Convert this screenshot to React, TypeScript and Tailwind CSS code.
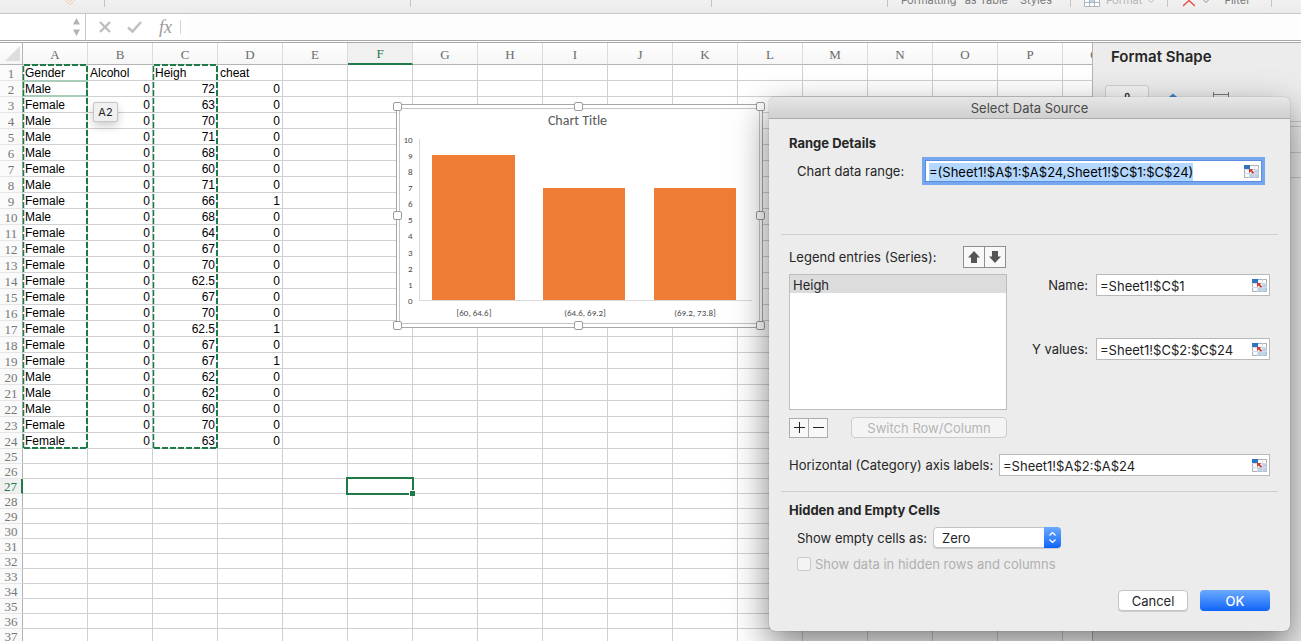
import { useEffect, useRef } from "react";
import type { ReactNode, Ref } from "react";

const SANS = "font-[Inter,'Liberation_Sans',sans-serif]";

const columns = "ABCDEFGHIJKLMNOPQ".split("");

const records: [string, string, string][] = [
  ["Male", "72", "0"],
  ["Female", "63", "0"],
  ["Male", "70", "0"],
  ["Male", "71", "0"],
  ["Male", "68", "0"],
  ["Female", "60", "0"],
  ["Male", "71", "0"],
  ["Female", "66", "1"],
  ["Male", "68", "0"],
  ["Female", "64", "0"],
  ["Female", "67", "0"],
  ["Female", "70", "0"],
  ["Female", "62.5", "0"],
  ["Female", "67", "0"],
  ["Female", "70", "0"],
  ["Female", "62.5", "1"],
  ["Female", "67", "0"],
  ["Female", "67", "1"],
  ["Male", "62", "0"],
  ["Male", "62", "0"],
  ["Male", "60", "0"],
  ["Female", "70", "0"],
  ["Female", "63", "0"],
];

const sheet: string[][] = [
  ["Gender", "Alcohol", "Heigh", "cheat"],
  ...records.map(([gender, height, cheat]) => [gender, "0", height, cheat]),
];

function Separator({ className = "" }: { className?: string }) {
  return <span className={`h-3 w-px shrink-0 bg-[#c4c4c4] ${className}`} />;
}

function Ribbon() {
  return (
    <header
      className={`flex h-[14px] shrink-0 items-end overflow-hidden border-b border-[#c6c6c6] bg-linear-to-b from-[#f1f1f1] to-[#ebebeb] pb-[6px] text-[11px] leading-[14px] text-[#7a7a7a] ${SANS}`}
    >
      <svg className="ml-[64px] h-3 w-3 shrink-0" viewBox="0 0 12 12" fill="none" stroke="#f3cfb4">
        <path d="M1 5l5 5 5-5M4 5l2 2 2-2" />
      </svg>
      <Separator className="ml-[28px]" />
      <Separator className="ml-[305px]" />
      <Separator className="ml-[300px]" />
      <Separator className="ml-[175px]" />
      <span className="ml-[13px] shrink-0">Formatting</span>
      <span className="ml-2 shrink-0">as Table</span>
      <span className="ml-3 shrink-0">Styles</span>
      <Separator className="ml-[18px]" />
      <svg className="ml-[13px] h-[14px] w-4 shrink-0" viewBox="0 0 16 14" fill="#fff" stroke="#a9b4bd">
        <path d="M.5.5h15v13H.5z" />
        <path d="M5 .5h6v9H5z" fill="#b7d8f0" stroke="none" />
        <path d="M5.500 0v13M10.500 0v13M0 9.500h16M0 5.500h16" />
      </svg>
      <span className="ml-[6px] shrink-0 text-[#b5b5b5]">Format</span>
      <svg className="mb-1 ml-[6px] h-1 w-[6px] shrink-0" viewBox="0 0 6 4" fill="none" stroke="#bbb">
        <path d="M0 .5l3 3 3-3" />
      </svg>
      <Separator className="ml-[13px]" />
      <svg className="ml-[15px] h-3 w-3 shrink-0" viewBox="0 0 12 12" fill="none" stroke="#ee4b4b" strokeWidth="1.4">
        <path d="M0 0l12 11M12 0L0 11" />
      </svg>
      <svg className="mb-1 ml-[8px] h-1 w-[6px] shrink-0" viewBox="0 0 6 4" fill="none" stroke="#888">
        <path d="M0 .5l3 3 3-3" />
      </svg>
      <span className="ml-[15px] shrink-0">Filter</span>
      <Separator className="ml-[21px]" />
    </header>
  );
}

function FormulaBar() {
  return (
    <div className="flex h-[29px] shrink-0 items-stretch border-b border-[#a8a8a8] bg-white">
      <div className="mb-px flex grow items-stretch border-b border-[#a8a8a8]">
        <div className="flex w-[86px] items-center justify-end border-r border-[#c8c8c8] pr-[5px]">
          <svg className="h-[18px] w-[7px]" viewBox="0 0 7 18" fill="#b3b3b3">
            <path d="M3.500 0L7 6.500H0zM3.500 18L0 11.500h7z" />
          </svg>
        </div>
        <button type="button" aria-label="Cancel entry" className="ml-[13px] flex items-center">
          <svg className="h-3 w-3" viewBox="0 0 12 12" fill="none" stroke="#bdbdbd" strokeWidth="2.300">
            <path d="M1 1l10 10M11 1L1 11" />
          </svg>
        </button>
        <button type="button" aria-label="Confirm entry" className="ml-4 flex items-center">
          <svg className="h-3 w-[15px]" viewBox="0 0 15 12" fill="none" stroke="#c0c0c0" strokeWidth="2.600">
            <path d="M1 6.500l4.500 4L14 1" />
          </svg>
        </button>
        <button
          type="button"
          className="ml-[17px] flex items-center font-['Liberation_Serif',serif] text-[18px] leading-5 text-[#999] italic"
        >
          fx
        </button>
        <span className="my-[6px] ml-[8px] w-px bg-[#d6d6d6]" />
        <input aria-label="Formula" className="ml-[6px] min-w-0 grow bg-[#fdfdfd] outline-none" />
      </div>
    </div>
  );
}

function MarchingAnts({ className }: { className: string }) {
  return (
    <svg
      className={`pointer-events-none absolute z-10 h-[386px] w-[67px] ${className}`}
      viewBox="0 0 67 386"
      fill="none"
      stroke="#1f7a4a"
      strokeWidth="2"
      strokeDasharray="6 2"
    >
      <path d="M2 1H66M2 384H66M65 2V384" />
      <path d="M1.500 2V384" strokeWidth="1.500" />
    </svg>
  );
}

function Grid() {
  return (
    <table className="w-[1128px] table-fixed border-separate border-spacing-0">
      <colgroup>
        <col className="w-[23px]" />
        {columns.map((c) => (
          <col key={c} className="w-[65px]" />
        ))}
      </colgroup>
      <thead>
        <tr className="h-[22px] bg-linear-to-b from-white to-[#f5f5f5] font-['Liberation_Serif',serif] text-[13px] leading-[18px] text-[#6a6a6a]">
          <th className="border-r border-b border-[#b4b4b4] p-0">
            <svg className="ml-[5px] h-[15px] w-[15px]" viewBox="0 0 15 15" fill="#dedede">
              <path d="M15 0v15H0z" />
            </svg>
          </th>
          {columns.map((c) => (
            <th
              key={c}
              className={
                c === "F"
                  ? "border-r border-b-2 border-r-[#dcdcdc] border-b-[#1f7a4a] bg-[#f0f0f0] p-0 pt-[2px] font-normal text-[#1f7a4a]"
                  : "border-r border-b border-r-[#dcdcdc] border-b-[#b4b4b4] p-0 pt-[3px] font-normal"
              }
            >
              {c}
            </th>
          ))}
        </tr>
      </thead>
      <tbody>
        {Array.from({ length: 37 }, (_, i) => {
          const row = i + 1;
          const filled = row <= 24;
          return (
            <tr key={row} className={filled ? "h-4" : "h-[15px]"}>
              <th
                className={`border-b border-b-[#e6e6e6] p-0 font-['Liberation_Serif',serif] text-[13px] leading-3 font-normal ${
                  row === 27
                    ? "border-r-2 border-r-[#1f7a4a] bg-[#f0f0f0] text-[#1f7a4a]"
                    : "border-r border-r-[#b4b4b4] bg-[#fafafa] text-[#777]"
                }`}
              >
                <span className={filled ? "block pt-[3px]" : "block pt-[2px]"}>{row}</span>
              </th>
              {columns.map((c, j) => {
                const value = sheet[i]?.[j];
                const numeric = row > 1 && j > 0;
                return (
                  <td
                    key={c}
                    className={`relative border-r border-b border-[#d0d0d0] px-[2px] py-0 font-['Liberation_Sans',Arial,sans-serif] text-[12px] leading-[14px] whitespace-nowrap text-black ${
                      numeric ? "text-right" : "text-left"
                    }`}
                  >
                    {value}
                    {row === 1 && (c === "A" || c === "C") && <MarchingAnts className="-top-px -left-px" />}
                    {row === 2 && c === "A" && (
                      <span className="absolute -inset-px z-[5] border-2 border-[#a9cdb8]" />
                    )}
                    {row === 27 && c === "F" && (
                      <span className="absolute -inset-[2px] z-10 border-2 border-[#1f7a4a]">
                        <span className="absolute -right-[3px] -bottom-[3px] h-[6px] w-[6px] border-t border-l border-white bg-[#1f7a4a]" />
                      </span>
                    )}
                  </td>
                );
              })}
            </tr>
          );
        })}
      </tbody>
    </table>
  );
}

const handles: [number, number][] = [
  [5, 5],
  [186, 5],
  [368, 5],
  [5, 114],
  [368, 114],
  [5, 224],
  [186, 224],
  [368, 224],
];

const bars = [
  { x: 40, y: 54, w: 83, label: "[60, 64.6]", cx: 82 },
  { x: 151, y: 87, w: 82, label: "(64.6, 69.2]", cx: 193 },
  { x: 262, y: 87, w: 82, label: "(69.2, 73.8]", cx: 303 },
];

function Chart() {
  return (
    <svg
      className="absolute top-[58px] left-[392px] h-[230px] w-[374px] font-[Carlito,Lato,sans-serif]"
      viewBox="0 0 374 230"
      role="img"
      aria-label="Histogram of heights"
    >
      <rect x="4.500" y="3.500" width="366" height="223" fill="#fff" stroke="#a6a6a6" />
      <rect x="7.500" y="7.500" width="360" height="215" fill="#fff" stroke="#c4c4c4" />
      <text x="185.500" y="24" textAnchor="middle" fontSize="14" fill="#595959">
        Chart Title
      </text>
      <path d="M27.500 38V199.500H360" fill="none" stroke="#d9d9d9" />
      {Array.from({ length: 11 }, (_, n) => (
        <text key={n} x="20.500" y={203 - n * 16.15} textAnchor="end" fontSize="9" fill="#4a4a4a">
          {n}
        </text>
      ))}
      {bars.map((b) => (
        <g key={b.label}>
          <rect x={b.x} y={b.y} width={b.w} height={199 - b.y} fill="#ef7d36" />
          <text x={b.cx} y="215" textAnchor="middle" fontSize="9" fill="#4a4a4a">
            {b.label}
          </text>
        </g>
      ))}
      {handles.map(([x, y]) => (
        <rect key={`${x}-${y}`} x={x - 3.5} y={y - 3.5} width="8" height="8" rx="1.500" fill="#fff" stroke="#9a9a9a" />
      ))}
    </svg>
  );
}

function FormatPane() {
  return (
    <aside className={`w-[209px] shrink-0 border-l border-[#b4b4b4] bg-[#ececec] ${SANS}`}>
      <h2 className="pt-1 pl-[18px] text-[15px] leading-5 font-semibold text-[#262626]">Format Shape</h2>
      <div className="mt-[18px] ml-3 flex h-9 gap-4">
        <button
          type="button"
          aria-label="Fill and line"
          className="flex w-[44px] justify-center rounded-[3px] border border-[#cfcfcf] bg-[#f4f4f4] pt-[6px]"
        >
          <svg className="h-5 w-3" viewBox="0 0 12 20" fill="none" stroke="#444" strokeWidth="1.500">
            <path d="M4.500 12V3a1.800 1.800 0 013.500 0v9" />
          </svg>
        </button>
        <svg className="mt-[8px] h-5 w-4" viewBox="0 0 16 20" fill="#3f87d3">
          <path d="M1 6.500L8 .5l7 6v7l-7 5-7-5z" />
        </svg>
        <svg className="mt-[7px] ml-4 h-5 w-4" viewBox="0 0 16 20" fill="none" stroke="#777">
          <path d="M.5 0v5M15.500 0v5M0 2.500h16" />
        </svg>
      </div>
      <div className="h-[6px] border-y border-[#c9c9c9]" />
      <div className="h-[26px] border-b border-[#c9c9c9]" />
      <div className="h-[25px] border-b border-[#c9c9c9]" />
    </aside>
  );
}

function RangePicker() {
  return (
    <button type="button" aria-label="Pick range" className="shrink-0">
      <svg className="block h-[13px] w-[15px]" viewBox="0 0 15 13">
        <path d="M.5.5h14v12H.5z" fill="#fbfbfb" stroke="#a9adb2" />
        <path d="M5 8h9.500v4.500H5zM10 5h4.500v3H10z" fill="#bcd3ea" />
        <path d="M5.500 4v9M10.500 0v13M0 4.500h15M0 8.500h15" fill="none" stroke="#d3dae2" />
        <path d="M0 0h6v4H0z" fill="#2f74c0" />
        <path d="M5 4h4L8 5.200l2.200 2.200-1.400 1.400-2.300-2.200L5 8z" fill="#cf3a35" />
      </svg>
    </button>
  );
}

function RangeField({
  id,
  value,
  className,
  inputRef,
}: {
  id: string;
  value: string;
  className: string;
  inputRef?: Ref<HTMLInputElement>;
}) {
  return (
    <div className={`flex items-center bg-white ${className}`}>
      <input
        id={id}
        ref={inputRef}
        defaultValue={value}
        className="min-w-0 grow bg-transparent pt-px text-[13px] leading-[18px] text-[#222] outline-none selection:bg-[#b3d7ff] selection:text-black"
      />
      <RangePicker />
    </div>
  );
}

function SquareButton({ label, className, children }: { label: string; className: string; children: ReactNode }) {
  return (
    <button type="button" aria-label={label} className={`flex items-center justify-center border bg-[#f8f8f8] ${className}`}>
      {children}
    </button>
  );
}

const FIELD = "h-[22px] border border-[#b9b9b9] pr-[2px] pl-[3px]";

function DataSourceDialog() {
  const rangeRef = useRef<HTMLInputElement>(null);

  useEffect(() => {
    rangeRef.current?.focus();
    rangeRef.current?.select();
  }, []);

  return (
    <section
      role="dialog"
      aria-labelledby="dialog-title"
      className={`absolute top-[97px] right-[11px] z-30 w-[521px] rounded-[6px] bg-[#ececec] text-[13px] leading-4 text-[#262626] shadow-[0_0_1px_rgba(0,0,0,0.5),0_14px_36px_rgba(0,0,0,0.5)] ${SANS}`}
    >
      <h1
        id="dialog-title"
        className="h-[22px] rounded-t-[6px] border-b border-[#adadad] bg-linear-to-b from-[#e6e6e6] to-[#d0d0d0] text-center text-[13px] leading-[22px] text-[#4a4a4a]"
      >
        Select Data Source
      </h1>
      <form className="px-5 pt-4 pb-5" onSubmit={(e) => e.preventDefault()}>
        <h2 className="font-bold">Range Details</h2>
        <div className="mt-[6px] mr-[5px] flex h-7 items-center pl-2">
          <label htmlFor="chart-range" className="w-[128px]">
            Chart data range:
          </label>
          <RangeField
            id="chart-range"
            inputRef={rangeRef}
            value="=(Sheet1!$A$1:$A$24,Sheet1!$C$1:$C$24)"
            className="mr-[3px] h-[22px] grow border border-[#5a8fe0] pr-[2px] pl-[3px] ring-3 ring-[#76a6ee]"
          />
        </div>

        <hr className="-mx-2 mt-[49px] border-[#cfcfcf]" />

        <div className="mt-[11px] flex h-[22px] w-[217px] items-center justify-between">
          <label htmlFor="series">Legend entries (Series):</label>
          <div className="flex">
            <SquareButton label="Move up" className="h-[22px] w-[22px] border-[#8f8f8f]">
              <svg className="h-3 w-3" viewBox="0 0 12 12" fill="#555">
                <path d="M6 0l6 6.500H9V12H3V6.500H0z" />
              </svg>
            </SquareButton>
            <SquareButton label="Move down" className="-ml-px h-[22px] w-[22px] border-[#8f8f8f]">
              <svg className="h-3 w-3" viewBox="0 0 12 12" fill="#555">
                <path d="M6 12l6-6.500H9V0H3v5.500H0z" />
              </svg>
            </SquareButton>
          </div>
        </div>

        <div className="mt-[6px] flex justify-between">
          <select
            id="series"
            size={7}
            defaultValue="Heigh"
            className="h-[136px] w-[218px] appearance-none overflow-hidden border border-[#bdbdbd] bg-white outline-none"
          >
            <option className="h-[18px] px-[3px] pt-[2px] pb-0 text-[13px] text-[#262626] checked:bg-[#dcdcdc] checked:bg-linear-to-b checked:from-[#dcdcdc] checked:to-[#dcdcdc]">
              Heigh
            </option>
          </select>
          <div className="flex flex-col gap-[42px]">
            <div className="flex items-center justify-end gap-2">
              <label htmlFor="series-name">Name:</label>
              <RangeField id="series-name" value="=Sheet1!$C$1" className={`w-[174px] ${FIELD}`} />
            </div>
            <div className="flex items-center justify-end gap-2">
              <label htmlFor="series-values">Y values:</label>
              <RangeField id="series-values" value="=Sheet1!$C$2:$C$24" className={`w-[174px] ${FIELD}`} />
            </div>
          </div>
        </div>

        <div className="mt-[7px] flex h-[21px] w-[218px] items-center justify-between">
          <div className="flex">
            <SquareButton label="Add series" className="h-5 w-5 border-[#adadad]">
              <svg className="h-[11px] w-[11px]" viewBox="0 0 11 11" stroke="#222">
                <path d="M5.500 0v11M0 5.500h11" />
              </svg>
            </SquareButton>
            <SquareButton label="Remove series" className="-ml-px h-5 w-5 border-[#adadad]">
              <svg className="h-[11px] w-[11px]" viewBox="0 0 11 11" stroke="#222">
                <path d="M0 5.500h11" />
              </svg>
            </SquareButton>
          </div>
          <button
            type="button"
            disabled
            className="h-[21px] w-[156px] rounded-[4px] border border-[#cdcdcd] bg-[#f4f4f4] text-[#b5b5b5]"
          >
            Switch Row/Column
          </button>
        </div>

        <div className="mt-4 flex items-center justify-between">
          <label htmlFor="axis-labels" className="whitespace-nowrap">
            Horizontal (Category) axis labels:
          </label>
          <RangeField id="axis-labels" value="=Sheet1!$A$2:$A$24" className={`w-[271px] ${FIELD}`} />
        </div>

        <hr className="-mx-2 mt-[15px] border-[#cfcfcf]" />

        <h2 className="mt-[10px] font-bold">Hidden and Empty Cells</h2>
        <div className="mt-[9px] flex h-[21px] items-center pl-2">
          <label htmlFor="empty-cells" className="w-[136px]">
            Show empty cells as:
          </label>
          <div className="relative w-[128px]">
            <select
              id="empty-cells"
              defaultValue="Zero"
              className="block h-[21px] w-full appearance-none rounded-[4px] border border-[#c4c4c4] bg-white pl-2 text-[13px] leading-4 shadow-[0_1px_0_rgba(0,0,0,0.12)] outline-none"
            >
              <option>Gaps</option>
              <option>Zero</option>
            </select>
            <span className="pointer-events-none absolute inset-y-0 right-0 flex w-[17px] items-center justify-center rounded-r-[4px] bg-linear-to-b from-[#6aa9fb] to-[#0a63fb]">
              <svg className="h-[11px] w-[7px]" viewBox="0 0 7 11" fill="none" stroke="#fff" strokeWidth="1.300">
                <path d="M.5 3.500l3-3 3 3M.5 7.500l3 3 3-3" />
              </svg>
            </span>
          </div>
        </div>
        <label className="mt-2 flex h-4 items-center gap-1 pl-2 text-[#b0b0b0]">
          <input
            type="checkbox"
            disabled
            className="h-[14px] w-[14px] appearance-none rounded-[3px] border border-[#cbcbcb] bg-[#f4f4f4]"
          />
          Show data in hidden rows and columns
        </label>

        <div className="mt-[18px] flex justify-end gap-3">
          <button
            type="button"
            className="h-[21px] w-[70px] rounded-[4px] border border-[#c4c4c4] bg-white shadow-[0_1px_0_rgba(0,0,0,0.12)]"
          >
            Cancel
          </button>
          <button
            type="submit"
            className="h-[21px] w-[70px] rounded-[4px] bg-linear-to-b from-[#6aa9fb] to-[#0a63fb] font-medium text-white"
          >
            OK
          </button>
        </div>
      </form>
    </section>
  );
}

export default function App() {
  return (
    <div className="relative flex h-screen flex-col overflow-hidden bg-white">
      <Ribbon />
      <FormulaBar />
      <div className="flex min-h-0 grow">
        <main className="relative min-w-0 grow basis-0 overflow-hidden">
          <Grid />
          <div
            role="tooltip"
            className={`absolute top-[59px] left-[93px] z-20 flex h-5 w-[25px] items-center justify-center rounded-[2px] border border-[#c6c6c6] bg-[#f0f0f0] text-[11px] text-[#222] shadow-[0_4px_10px_rgba(0,0,0,0.2)] ${SANS}`}
          >
            A2
          </div>
          <Chart />
        </main>
        <FormatPane />
      </div>
      <DataSourceDialog />
    </div>
  );
}
